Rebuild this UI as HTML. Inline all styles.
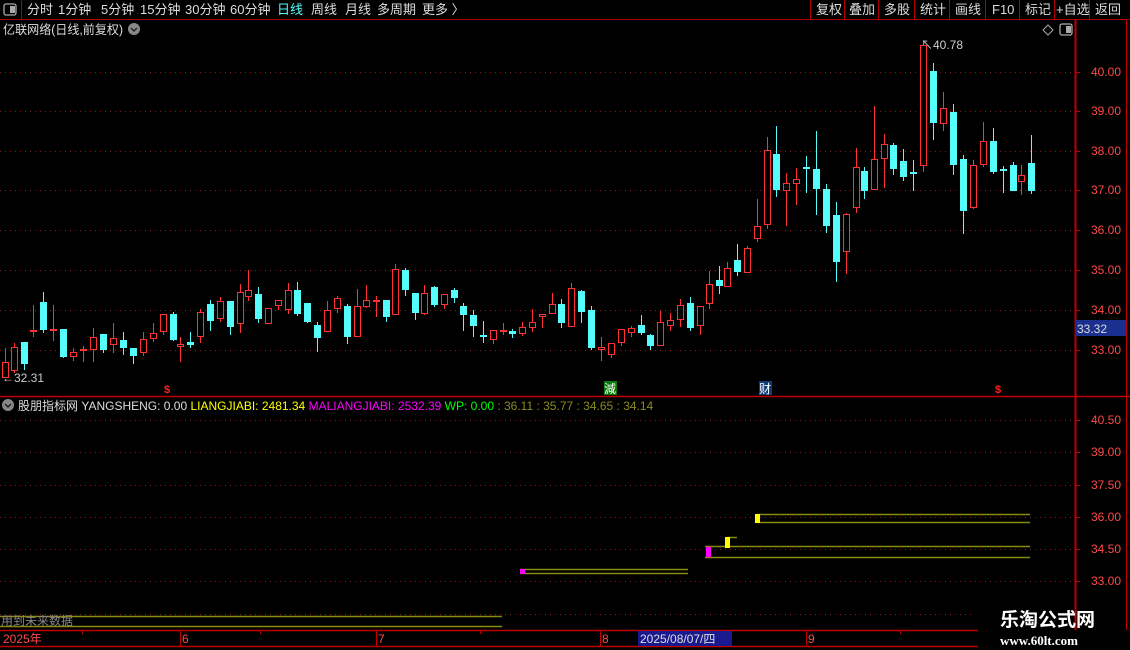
<!DOCTYPE html>
<html><head><meta charset="utf-8">
<style>
html,body{margin:0;padding:0;background:#000;width:1130px;height:650px;overflow:hidden;font-family:"Liberation Sans","Noto Sans CJK SC",sans-serif}
svg{position:absolute;left:0;top:0}
</style></head><body>
<svg id="s" width="1130" height="650" xmlns="http://www.w3.org/2000/svg" font-family="Liberation Sans, Noto Sans CJK SC, sans-serif">
<rect x="0" y="0" width="1130" height="19" fill="#000"/>
<line x1="0" y1="19.5" x2="1130" y2="19.5" stroke="#b00000"/>
<line x1="21.5" y1="0" x2="21.5" y2="19" stroke="#b00000"/>
<rect x="4" y="4" width="12" height="11" rx="2" fill="none" stroke="#aaa" stroke-width="1.3"/>
<rect x="10" y="6" width="5" height="7" fill="#aaa"/>
<g font-size="13" fill="#ddd">
<text x="27" y="14">分时</text><text x="58" y="14">1分钟</text><text x="101" y="14">5分钟</text><text x="140" y="14">15分钟</text><text x="185" y="14">30分钟</text><text x="230" y="14">60分钟</text>
<text x="277" y="14" fill="#54fcfc">日线</text><text x="311" y="14">周线</text><text x="345" y="14">月线</text><text x="377" y="14">多周期</text><text x="422" y="14">更多 〉</text>
</g>
<g stroke="#b00000"><line x1="810.5" y1="0" x2="810.5" y2="19"/><line x1="844.5" y1="0" x2="844.5" y2="19"/><line x1="878.5" y1="0" x2="878.5" y2="19"/><line x1="914.5" y1="0" x2="914.5" y2="19"/><line x1="949.5" y1="0" x2="949.5" y2="19"/><line x1="985.5" y1="0" x2="985.5" y2="19"/><line x1="1019.5" y1="0" x2="1019.5" y2="19"/><line x1="1054.5" y1="0" x2="1054.5" y2="19"/><line x1="1089.5" y1="0" x2="1089.5" y2="19"/></g>
<g font-size="13" fill="#ddd"><text x="816" y="14">复权</text><text x="849" y="14">叠加</text><text x="884" y="14">多股</text><text x="920" y="14">统计</text><text x="955" y="14">画线</text><text x="992" y="14">F10</text><text x="1025" y="14">标记</text><text x="1056" y="14">+自选</text><text x="1095" y="14">返回</text></g>
<text x="3" y="34" font-size="12.5" fill="#ddd" textLength="120" lengthAdjust="spacingAndGlyphs">亿联网络(日线,前复权)</text>
<circle cx="134" cy="29" r="6" fill="#888"/><path d="M131 28l3 3 3-3" stroke="#222" stroke-width="1.5" fill="none"/>
<path d="M1048 25l5 5-5 5-5-5z" fill="none" stroke="#aaa"/>
<rect x="1060" y="24" width="12" height="11" rx="2" fill="none" stroke="#aaa" stroke-width="1.3"/><rect x="1066" y="26" width="5" height="7" fill="#aaa"/>
<line x1="1075.5" y1="20" x2="1075.5" y2="630" stroke="#c00000" stroke-width="2"/>
<line x1="1126.5" y1="20" x2="1126.5" y2="630" stroke="#c00000"/>
<line x1="0" y1="396.5" x2="1130" y2="396.5" stroke="#c00000" stroke-width="1.5"/>
<g id="grid" stroke="#8a1a1a" stroke-dasharray="1,4"></g>
<g id="c"></g>
<g font-size="12" fill="#ff4848" id="ax"></g>
<rect x="1075" y="320" width="51" height="16" fill="#1b2f8f"/>
<text x="1077" y="333" font-size="12" fill="#ddd">33.32</text>
<text x="2" y="382" font-size="12" fill="#ccc">←32.31</text>
<text x="921" y="49" font-size="12" fill="#ccc">↖40.78</text>
<text x="164" y="393" font-size="11" fill="#ff2020" font-weight="bold">$</text>
<text x="995" y="393" font-size="11" fill="#ff2020" font-weight="bold">$</text>
<rect x="604" y="381" width="13" height="14" fill="#0a7a0a"/><text x="604" y="393" font-size="12" fill="#fff">減</text>
<rect x="759" y="381" width="13" height="14" fill="#103c78"/><text x="759" y="393" font-size="12" fill="#fff">财</text>
<circle cx="8" cy="405" r="6" fill="#888"/><path d="M5 404l3 3 3-3" stroke="#222" stroke-width="1.5" fill="none"/>
<text x="18" y="410" font-size="12"><tspan fill="#ddd">股朋指标网  YANGSHENG: 0.00 </tspan><tspan fill="#ffff00"> LIANGJIABI: 2481.34 </tspan><tspan fill="#ff00ff"> MALIANGJIABI: 2532.39 </tspan><tspan fill="#00ff00"> WP: 0.00 </tspan><tspan fill="#8a8a20"> : 36.11  : 35.77  : 34.65  : 34.14</tspan></text>
<g stroke="#8a8a10" stroke-width="1.5" fill="none">
<line x1="757" y1="514.5" x2="1030" y2="514.5"/><line x1="757" y1="522.5" x2="1030" y2="522.5"/>
<line x1="727" y1="537.5" x2="737" y2="537.5"/><line x1="705" y1="546.5" x2="1030" y2="546.5"/><line x1="705" y1="557.5" x2="1030" y2="557.5"/>
<line x1="520" y1="569.5" x2="688" y2="569.5"/><line x1="520" y1="573.5" x2="688" y2="573.5"/>
<line x1="0" y1="616.5" x2="502" y2="616.5"/><line x1="0" y1="626.5" x2="502" y2="626.5"/>
</g>
<rect x="755" y="514" width="5" height="9" fill="#ffff00"/>
<rect x="725" y="537" width="5" height="11" fill="#ffff00"/>
<rect x="706" y="547" width="5" height="10" fill="#ff00ff"/>
<rect x="520" y="569" width="5" height="5" fill="#ff00ff"/>
<text x="1" y="625" font-size="12" fill="#888">用到未来数据</text>
<line x1="0" y1="614.5" x2="975" y2="614.5" stroke="#8a1a1a" stroke-dasharray="1,4"/>
<line x1="0" y1="630.5" x2="978" y2="630.5" stroke="#c00000" stroke-width="1.5"/>
<line x1="0" y1="646.5" x2="978" y2="646.5" stroke="#c00000" stroke-width="1.5"/>
<g stroke="#c00000"><line x1="82.5" y1="630" x2="82.5" y2="634"/><line x1="180.5" y1="630" x2="180.5" y2="646"/><line x1="376.5" y1="630" x2="376.5" y2="646"/><line x1="600.5" y1="630" x2="600.5" y2="646"/><line x1="806.5" y1="630" x2="806.5" y2="646"/><line x1="260.5" y1="630" x2="260.5" y2="634"/><line x1="480.5" y1="630" x2="480.5" y2="634"/><line x1="700.5" y1="630" x2="700.5" y2="634"/><line x1="900.5" y1="630" x2="900.5" y2="634"/></g>
<g font-size="12" fill="#ff4848"><text x="3" y="643">2025年</text><text x="182" y="643">6</text><text x="378" y="643">7</text><text x="602" y="643">8</text><text x="808" y="643">9</text></g>
<rect x="638" y="631" width="94" height="15" fill="#1a1a90"/><text x="640" y="643" font-size="12" fill="#ddd">2025/08/07/四</text>
<text x="1000" y="626" font-size="19" font-weight="bold" fill="#fff">乐淘公式网</text>
<text x="1000" y="645" font-size="13" font-weight="bold" fill="#fff" font-family="Liberation Serif, serif">www.60lt.com</text>
</svg>
<script>
var NS="http://www.w3.org/2000/svg";
function el(t,a,p){var e=document.createElementNS(NS,t);for(var k in a)e.setAttribute(k,a[k]);p.appendChild(e);return e;}
var g=document.getElementById('grid');
[72,111,151,190,230,270,310,350,420,452,485,517,549,581].forEach(function(y){el('line',{x1:0,y1:y+.5,x2:1075,y2:y+.5},g)});
var ax=document.getElementById('ax');
var L=[[40,72,"40.00"],[39,111,"39.00"],[38,151,"38.00"],[37,190,"37.00"],[36,230,"36.00"],[35,270,"35.00"],[34,310,"34.00"],[33,350,"33.00"],[0,420,"40.50"],[0,452,"39.00"],[0,485,"37.50"],[0,517,"36.00"],[0,549,"34.50"],[0,581,"33.00"]];
L.forEach(function(l){var t=el('text',{x:1091,y:l[1]+4},ax);t.textContent=l[2];el('line',{x1:1075,y1:l[1]+.5,x2:1080,y2:l[1]+.5,stroke:'#c00000'},ax);});
var C=[
[4.5,'r',362,378,348,378],[14,'r',347,371,343,373],[24,'c',342,364,342,370],[33,'r',330,332,305,337],[43,'c',302,330,292,333],[53,'r',329,331,305,341],[63,'c',329,357,329,358],[73,'r',352,357,348,361],[83,'r',349,351,346,362],[93,'r',337,350,328,362],[103,'c',334,350,334,353],[113,'r',338,345,323,353],[123,'c',340,348,332,355],[133,'c',348,356,348,364],[143,'r',339,353,332,356],[153,'r',333,339,323,342],[163,'r',314,332,314,335],[173,'c',314,340,312,341],[180,'r',344,347,337,362],[190,'c',342,345,332,348],[200,'r',312,337,309,343],[210,'c',304,321,300,331],[220,'r',301,319,297,322],[230,'c',301,327,301,335],[240,'r',292,324,284,333],[248,'r',290,297,270,301],[258,'c',294,319,287,323],[268,'r',308,324,308,324],[278,'r',300,306,300,310],[288,'r',290,310,283,314],[297,'c',290,314,282,316],[307,'c',303,322,303,323],[317,'c',325,338,322,352],[327,'r',310,332,301,332],[337,'r',298,309,296,313],[347,'c',306,337,304,344],[357,'r',306,337,289,337],
[366,'r',300,307,285,308],[376,'r',300,302,296,317],[386,'c',300,317,300,322],[395,'r',269,315,264,315],[405,'c',270,290,268,296],[415,'c',293,313,293,320],[424,'r',293,314,285,315],[434,'c',287,305,286,307],[444,'r',294,305,294,309],[454,'c',290,298,288,303],[463,'c',306,315,303,331],[473,'c',315,326,310,337],[483,'c',335,337,321,343],[493,'r',330,340,330,344],[503,'r',330,332,323,335],[512,'c',331,334,329,338],[522,'r',327,334,322,336],[532,'r',322,328,309,332],[542,'r',314,317,314,328],[552,'r',304,314,293,314],[561,'c',304,323,299,328],[571,'r',288,327,283,327],[581,'c',291,312,290,323],[591,'c',310,348,306,350],[601,'r',347,350,337,361],[611,'r',343,355,343,358],[621,'r',329,343,329,346],[631,'r',328,333,326,337],[641,'c',325,333,315,335],[650,'c',335,346,334,350],[660,'r',322,346,311,346],[670,'r',320,326,313,331],[680,'r',305,320,299,327],[690,'c',303,328,297,331],[700,'r',306,326,306,335],[709,'r',284,304,271,309],[719,'c',280,286,266,294],
[727,'r',268,287,262,287],[737,'c',260,272,244,276],[747,'r',248,273,246,273],[757,'r',226,239,199,242],[767,'r',150,225,137,229],[776,'c',154,190,126,197],[786,'r',183,191,173,226],[796,'r',179,184,168,205],[806,'c',167,169,156,193],[816,'c',169,189,131,215],[826,'c',189,226,184,233],[836,'c',215,262,202,282],[846,'r',214,252,213,274],[856,'r',167,208,148,213],[864,'c',171,191,167,199],[874,'r',159,190,106,190],[884,'r',144,159,134,188],[893,'c',145,169,143,175],[903,'c',161,177,149,181],[913,'c',172,174,160,191],[923,'r',45,166,45,172],[933,'c',71,123,63,140],[943,'r',108,124,92,131],[953,'c',112,165,104,175],[963,'c',159,211,155,234],[973,'r',165,208,160,209],[983,'r',141,165,122,167],[993,'c',141,172,128,174],[1003,'c',169,171,166,193],[1013,'c',165,191,162,191],[1021,'r',175,182,165,195],[1031,'c',163,191,135,194]];
var cg=document.getElementById('c');
C.forEach(function(k){var x=Math.round(k[0])+.5,col=k[1]=='r'?'#ff3232':'#54fcfc';
el('line',{x1:x,y1:k[4],x2:x,y2:k[5],stroke:col},cg);
var h=k[3]-k[2];
if(k[1]=='r'){ if(h<=2){el('rect',{x:x-3.5,y:k[2],width:7,height:2,fill:col},cg);} else {el('rect',{x:x-3,y:k[2]+.5,width:6,height:h-1,fill:'#000',stroke:col},cg);} }
else { el('rect',{x:x-3.5,y:k[2],width:7,height:Math.max(h,2),fill:col},cg);} });
</script>
</body></html>
